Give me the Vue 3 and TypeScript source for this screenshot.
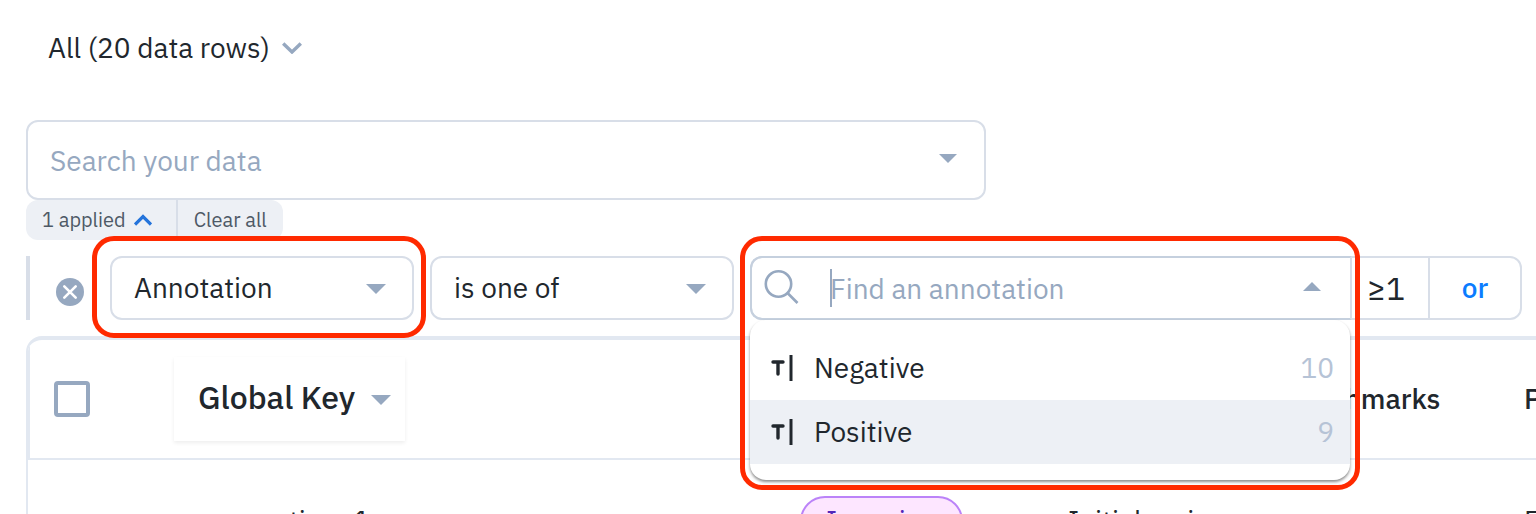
<script setup lang="ts">
import { ref } from 'vue'

interface Option {
  label: string
  count: number
  active: boolean
}

interface Column {
  name: string
  label: string
}

const fields: string[] = ['Annotation']
const operators: string[] = ['is one of']
const field = ref(fields[0])
const operator = ref(operators[0])
const query = ref('')
const search = ref('')
const allSelected = ref(false)

const options: Option[] = [
  { label: 'Negative', count: 10, active: false },
  { label: 'Positive', count: 9, active: true },
]

const columns: Column[] = [
  { name: 'key', label: 'Global Key' },
  { name: 'status', label: '' },
  { name: 'task', label: '' },
  { name: 'marks', label: 'Benchmarks' },
  { name: 'last', label: 'P' },
]
</script>

<template>
  <main class="page">
    <button type="button" class="scope">
      All (20 data rows)
      <svg class="scope-icon" viewBox="0 0 20 12" aria-hidden="true"><path d="M1.2 1.5 10 10 18.8 1.5" /></svg>
    </button>

    <div class="search">
      <input v-model="search" type="text" placeholder="Search your data" aria-label="Search your data" />
      <svg class="caret small" viewBox="0 0 20 10" aria-hidden="true"><path d="M0 0H20L10 10Z" /></svg>
    </div>

    <div class="applied">
      <button type="button" class="chip">
        1 applied
        <svg class="chip-icon" viewBox="0 0 18 12" aria-hidden="true"><path d="M1 10.5 9 2.5 17 10.5" /></svg>
      </button>
      <button type="button" class="chip">Clear all</button>
    </div>

    <div class="filter">
      <button type="button" class="remove" aria-label="Remove filter">
        <svg viewBox="0 0 28 28" aria-hidden="true">
          <circle cx="14" cy="14" r="14" />
          <path d="M8.3 8.3 19.7 19.7M19.7 8.3 8.3 19.7" />
        </svg>
      </button>

      <div class="pick marked">
        <select v-model="field" aria-label="Field">
          <option v-for="item in fields" :key="item">{{ item }}</option>
        </select>
        <svg class="caret" viewBox="0 0 20 10" aria-hidden="true"><path d="M0 0H20L10 10Z" /></svg>
      </div>

      <div class="pick">
        <select v-model="operator" aria-label="Operator">
          <option v-for="item in operators" :key="item">{{ item }}</option>
        </select>
        <svg class="caret" viewBox="0 0 20 10" aria-hidden="true"><path d="M0 0H20L10 10Z" /></svg>
      </div>

      <div class="group">
        <div class="combo">
          <svg class="glass" viewBox="0 0 36 36" aria-hidden="true">
            <circle cx="14.5" cy="14" r="12.7" />
            <path d="M23.5 23 33.5 33" />
          </svg>
          <span class="cursor"></span>
          <input v-model="query" type="text" placeholder="Find an annotation" aria-label="Find an annotation" />
          <svg class="caret small" viewBox="0 0 20 10" aria-hidden="true"><path d="M0 10H20L10 0Z" /></svg>
          <div class="menu" role="listbox">
            <button
              v-for="option in options"
              :key="option.label"
              type="button"
              role="option"
              class="option"
              :class="{ active: option.active }"
              :aria-selected="option.active"
            >
              <svg class="type-icon" viewBox="0 0 24 26" aria-hidden="true">
                <path class="tee" d="M3 7H13M8 7V19" />
                <path class="bar" d="M21 0V26" />
              </svg>
              <span class="option-label">{{ option.label }}</span>
              <span class="count">{{ option.count }}</span>
            </button>
          </div>
        </div>
        <button type="button" class="amount">≥1</button>
        <button type="button" class="or">or</button>
      </div>
    </div>

    <div class="grid">
      <table>
        <thead>
          <tr>
            <th class="check"><input v-model="allSelected" type="checkbox" aria-label="Select all rows" /></th>
            <th v-for="column in columns" :key="column.name" :class="column.name">
              <button v-if="column.name === 'key'" type="button" class="key-button">
                {{ column.label }}
                <svg class="caret" viewBox="0 0 20 10" aria-hidden="true"><path d="M0 0H20L10 10Z" /></svg>
              </button>
              <template v-else>{{ column.label }}</template>
            </th>
          </tr>
        </thead>
        <tbody>
          <tr>
            <td></td>
            <td class="row-key">question_1</td>
            <td class="status"><span class="pill">In review</span></td>
            <td>Initial review</td>
            <td></td>
            <td>F</td>
          </tr>
        </tbody>
      </table>
    </div>
  </main>
</template>

<style>
html,
body {
  height: 100%;
  overflow: hidden;
  background: #fff;
}
</style>

<style scoped>
* {
  box-sizing: border-box;
}

.page {
  display: flex;
  flex-direction: column;
  height: 100vh;
  overflow: hidden;
  padding: 28px 0 0 26px;
  font-family: 'IBM Plex Sans', 'Noto Sans', sans-serif;
  font-size: 28px;
  line-height: 40px;
  color: #21272d;
}

.page > * {
  flex-shrink: 0;
}

button,
input,
select {
  margin: 0;
  padding: 0;
  border: 0;
  background: none;
  color: inherit;
  font: inherit;
  outline: none;
}

svg {
  display: block;
  flex: none;
  fill: none;
}

input::placeholder {
  color: #96a8c0;
  opacity: 1;
}

.scope {
  display: flex;
  align-items: center;
  align-self: flex-start;
  gap: 12px;
  margin-left: 22px;
}

.scope-icon {
  width: 20px;
  height: 12px;
  stroke: #96a8c0;
  stroke-width: 3.4;
}

.caret {
  width: 20px;
  height: 10px;
  fill: #96a8c0;
}

.caret.small {
  width: 18px;
  height: 9px;
  margin-bottom: 4px;
}

.search {
  display: flex;
  align-items: center;
  width: 960px;
  max-width: 100%;
  height: 80px;
  margin-top: 52px;
  padding: 0 27px 0 22px;
  border: 2px solid #d8dee8;
  border-radius: 12px;
}

.search input,
.combo input {
  flex: 1;
  min-width: 0;
  padding-top: 2px;
}

.applied {
  display: flex;
  align-self: flex-start;
  height: 40px;
  border-radius: 12px;
  overflow: hidden;
  background: #edf0f5;
  color: #4e5966;
  font-size: 20px;
}

.chip {
  display: flex;
  align-items: center;
  gap: 8px;
  padding: 0 16px;
}

.chip + .chip {
  border-left: 2px solid #d8dee8;
}

.chip:first-child {
  padding-right: 24px;
}

.chip-icon {
  width: 18px;
  height: 12px;
  stroke: #2574db;
  stroke-width: 3.2;
}

.filter {
  display: flex;
  gap: 16px;
  height: 64px;
  margin: 16px 14px 16px 0;
  border-left: 4px solid #d8dee8;
}

.remove {
  width: 28px;
  height: 28px;
  margin: 22px 10px 0 26px;
}

.remove svg {
  width: 28px;
  height: 28px;
}

.remove circle {
  fill: #96a8c0;
}

.remove path {
  stroke: #fff;
  stroke-width: 2.6;
  stroke-linecap: round;
}

.pick {
  position: relative;
  display: grid;
  align-items: center;
  width: 304px;
}

.pick > * {
  grid-area: 1 / 1;
}

.pick select {
  width: 100%;
  height: 64px;
  padding: 0 64px 0 22px;
  border: 2px solid #d8dee8;
  border-radius: 12px;
  appearance: none;
}

.pick .caret {
  justify-self: end;
  margin: 2px 28px 0 0;
  pointer-events: none;
}

.marked::after,
.combo::after {
  content: '';
  position: absolute;
  inset: -20px -12px -18px -18px;
  border: 5px solid #ff2a00;
  border-radius: 22px;
  pointer-events: none;
}

.group {
  display: flex;
  flex: 1;
  min-width: 0;
  border: 2px solid #d8dee8;
  border-radius: 12px;
}

.combo {
  position: relative;
  z-index: 1;
  display: flex;
  align-items: center;
  flex: 1;
  min-width: 0;
  margin: -2px 0;
  margin-left: -2px;
  padding: 0 29px 0 12px;
  border: 2px solid #c5d0de;
  border-right-color: #d8dee8;
  border-radius: 12px 0 0 12px;
}

.combo::after {
  inset: -22px -10px -172px -12px;
}

.glass {
  width: 36px;
  height: 36px;
  stroke: #96a8c0;
  stroke-width: 2.6;
}

.cursor {
  width: 2px;
  height: 38px;
  margin: 0 -2px 0 30px;
  background: #96a8c0;
}

.menu {
  position: absolute;
  top: 62px;
  left: -2px;
  right: 0;
  padding: 16px 0;
  border-radius: 16px;
  background: #fff;
  box-shadow: 0 2px 3px rgba(0, 0, 0, 0.45);
}

.option {
  display: flex;
  align-items: center;
  width: 100%;
  height: 64px;
  padding: 0 16px 0 20px;
  text-align: left;
}

.option.active {
  background: #edf0f5;
}

.option-label {
  flex: 1;
  margin-left: 20px;
}

.count {
  color: #b6c3d6;
}

.type-icon {
  width: 24px;
  height: 26px;
  stroke: #21272d;
}

.tee {
  stroke-width: 3.4;
  stroke-linecap: round;
}

.bar {
  stroke-width: 3;
}

.amount {
  width: 76px;
  padding-right: 8px;
  font-size: 32px;
}

.or {
  width: 92px;
  border-left: 2px solid #d8dee8;
  color: #0b7cff;
  font-weight: 500;
}

.grid {
  overflow: hidden;
  border-top: 4px solid #e2e8f1;
  border-left: 2px solid #e2e8f1;
  border-radius: 16px 0 0;
}

table {
  table-layout: fixed;
  width: 1740px;
  border-collapse: separate;
  border-spacing: 0;
}

th {
  height: 120px;
  padding: 0;
  border-bottom: 2px solid #e2e8f1;
  text-align: left;
  font-weight: 500;
}

.check {
  width: 146px;
  padding-left: 24px;
  border-left: 2px solid #e2e8f1;
}

.check input {
  display: block;
  width: 36px;
  height: 36px;
  border: 4px solid #96a8c0;
  border-radius: 4px;
  appearance: none;
}

th.key {
  width: 626px;
}

th.status {
  width: 268px;
}

th.task {
  width: 212px;
}

th.marks {
  width: 244px;
}

.key-button {
  display: flex;
  align-items: center;
  gap: 16px;
  height: 84px;
  padding: 0 14px 4px 24px;
  box-shadow: 0 2px 4px rgba(0, 0, 0, 0.07);
  font-size: 32px;
}

.key-button .caret {
  margin-top: 6px;
}

td {
  height: 122px;
  padding: 0;
}

.row-key {
  padding-left: 54px;
}

.pill {
  display: inline-block;
  padding: 3px 18px 3px 24px;
  border: 2px solid #bb83f8;
  border-radius: 25px;
  background: #fde6ff;
  color: #5327b8;
}
</style>
